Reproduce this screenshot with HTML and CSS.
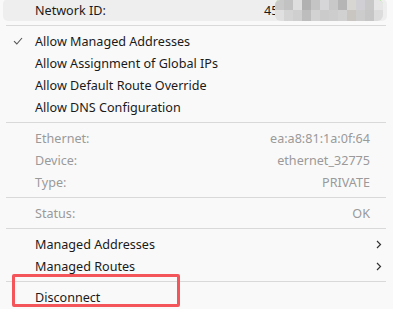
FILE: index.html
```html
<!DOCTYPE html>
<html lang="en">
<head>
    <meta charset="UTF-8">
    <title>Network Menu</title>
    <link rel="stylesheet" href="styles.css">
</head>
<body>
    <div class="menu">
        <div class="item active">
            <span class="check"></span>
            <span class="label">Network ID:</span>
            <span class="value id-value">45<span class="blur"><i></i><i></i><i></i><i></i><i></i><i></i><i></i><i></i><i></i><i></i><i></i><i></i><i></i><i></i><i></i><i></i><i></i><i></i><i></i><i></i><i></i><i></i><i></i><i></i></span></span>
        </div>
        <div class="sep"></div>
        <div class="item">
            <span class="check">
                <svg width="10" height="8" viewBox="0 0 10 8"><path d="M1 4.2 L3.8 7 L9 1" fill="none" stroke="#555" stroke-width="1.1"/></svg>
            </span>
            <span class="label">Allow Managed Addresses</span>
        </div>
        <div class="item">
            <span class="check"></span>
            <span class="label">Allow Assignment of Global IPs</span>
        </div>
        <div class="item">
            <span class="check"></span>
            <span class="label">Allow Default Route Override</span>
        </div>
        <div class="item">
            <span class="check"></span>
            <span class="label">Allow DNS Configuration</span>
        </div>
        <div class="sep"></div>
        <div class="item muted">
            <span class="check"></span>
            <span class="label">Ethernet:</span>
            <span class="value">ea:a8:81:1a:0f:64</span>
            <span class="arrow"></span>
        </div>
        <div class="item muted">
            <span class="check"></span>
            <span class="label">Device:</span>
            <span class="value">ethernet_32775</span>
            <span class="arrow"></span>
        </div>
        <div class="item muted">
            <span class="check"></span>
            <span class="label">Type:</span>
            <span class="value">PRIVATE</span>
            <span class="arrow"></span>
        </div>
        <div class="sep"></div>
        <div class="item muted">
            <span class="check"></span>
            <span class="label">Status:</span>
            <span class="value">OK</span>
            <span class="arrow"></span>
        </div>
        <div class="sep"></div>
        <div class="item">
            <span class="check"></span>
            <span class="label">Managed Addresses</span>
            <span class="arrow">
                <svg width="6" height="9" viewBox="0 0 6 9"><path d="M1 1 L4.5 4.5 L1 8" fill="none" stroke="#333" stroke-width="1.2"/></svg>
            </span>
        </div>
        <div class="item">
            <span class="check"></span>
            <span class="label">Managed Routes</span>
            <span class="arrow">
                <svg width="6" height="9" viewBox="0 0 6 9"><path d="M1 1 L4.5 4.5 L1 8" fill="none" stroke="#333" stroke-width="1.2"/></svg>
            </span>
        </div>
        <div class="sep"></div>
        <div class="item">
            <span class="check"></span>
            <span class="label">Disconnect</span>
        </div>
        <div class="highlight-box"></div>
    </div>
</body>
</html>
```

FILE: styles.css
```css
body {
    margin: 0;
    background: #f9f9f9;
    font-family: "Noto Sans", "Liberation Sans", sans-serif;
    font-size: 12.6px;
    color: #1a1a1a;
    overflow: hidden;
}
.menu {
    position: relative;
    padding: 0 6px 0 3px;
    margin-top: -1px;
}
.item {
    display: flex;
    align-items: center;
    height: 22px;
    border-radius: 5px;
}
.item.active {
    background: #eeeeee;
}
.check {
    width: 32px;
    display: flex;
    justify-content: center;
}
.check svg {
    margin-left: -3px;
}
.label {
    flex: 1;
    white-space: nowrap;
}
.value {
    white-space: nowrap;
}
.arrow {
    width: 17px;
    display: flex;
    padding-left: 6px;
    box-sizing: border-box;
}
.muted {
    color: #9a9a9a;
}
.id-value {
    display: flex;
    align-items: center;
    margin-right: -4px;
    width: 127px;
}
.blur {
    display: grid;
    grid-template-columns: repeat(12, 9px);
    grid-template-rows: 10px 11px;
    border-radius: 6px;
    overflow: hidden;
    margin-left: -3px;
    border-top: 1px solid #b7e4a4;
}
.blur i:nth-child(1) { background: #c9c9c9; }
.blur i:nth-child(2) { background: #c2c2c2; }
.blur i:nth-child(3) { background: #dedede; }
.blur i:nth-child(4) { background: #b1b1b1; }
.blur i:nth-child(5) { background: #c4c4c4; }
.blur i:nth-child(6) { background: #d6d6d8; }
.blur i:nth-child(7) { background: #c8c8c8; }
.blur i:nth-child(8) { background: #b5b5b5; }
.blur i:nth-child(9) { background: #d8d6d2; }
.blur i:nth-child(10) { background: #d0d0d4; }
.blur i:nth-child(11) { background: #c8c8c8; }
.blur i:nth-child(12) { background: #e6e6e6; }
.blur i:nth-child(13) { background: #e0e0e0; }
.blur i:nth-child(14) { background: #d4d4d4; }
.blur i:nth-child(15) { background: #cfcfcf; }
.blur i:nth-child(16) { background: #bdbdbd; }
.blur i:nth-child(17) { background: #d2d2d2; }
.blur i:nth-child(18) { background: #cbcbcb; }
.blur i:nth-child(19) { background: #cdcdcd; }
.blur i:nth-child(20) { background: #d1d1d1; }
.blur i:nth-child(21) { background: #c9c6c2; }
.blur i:nth-child(22) { background: #cccccc; }
.blur i:nth-child(23) { background: #c6c6c6; }
.blur i:nth-child(24) { background: #dcdcdc; }
.sep {
    height: 1px;
    background: #d9d9d9;
    margin: 4px 1px 4px 3px;
}
.highlight-box {
    position: absolute;
    left: 12px;
    top: 275px;
    width: 162px;
    height: 27px;
    border: 3px solid #f4555a;
    border-radius: 2px;
}
```
